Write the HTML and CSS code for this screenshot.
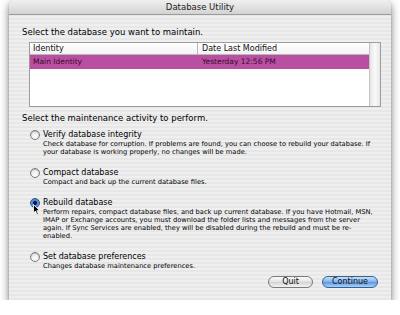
FILE: index.html
```html
<!DOCTYPE html>
<html lang="en">
<head>
  <meta charset="UTF-8">
  <title>Database Utility</title>
  <link rel="stylesheet" href="styles.css">
</head>
<body>
  <div class="window">
    <div class="titlebar">Database Utility</div>
    <div class="content">
      <p class="prompt">Select the database you want to maintain.</p>
      <div class="table">
        <div class="table-main">
          <div class="table-head">
            <span class="col-name">Identity</span>
            <span class="col-date">Date Last Modified</span>
          </div>
          <div class="table-row selected">
            <span class="col-name">Main Identity</span>
            <span class="col-date">Yesterday 12:56 PM</span>
          </div>
        </div>
        <div class="scrollbar"></div>
      </div>

      <p class="prompt second">Select the maintenance activity to perform.</p>
      <div class="options">
        <div class="option">
          <div class="option-title"><span class="radio"></span>Verify database integrity</div>
          <div class="option-desc">Check database for corruption. If problems are found, you can choose to rebuild your database. If your database is working properly, no changes will be made.</div>
        </div>
        <div class="option">
          <div class="option-title"><span class="radio"></span>Compact database</div>
          <div class="option-desc">Compact and back up the current database files.</div>
        </div>
        <div class="option">
          <div class="option-title"><span class="radio checked"></span>Rebuild database</div>
          <div class="option-desc">Perform repairs, compact database files, and back up current database. If you have Hotmail, MSN, IMAP or Exchange accounts, you must download the folder lists and messages from the server again. If Sync Services are enabled, they will be disabled during the rebuild and must be re-enabled.</div>
          <svg class="cursor" width="7" height="11" viewBox="0 0 7 11">
            <path d="M0.5 0.5 L0.5 9 L2.5 7 L4 10.5 L5.3 9.9 L3.9 6.6 L6.5 6.6 Z" fill="#000" stroke="#fff" stroke-width="0.8"/>
          </svg>
        </div>
        <div class="option">
          <div class="option-title"><span class="radio"></span>Set database preferences</div>
          <div class="option-desc">Changes database maintenance preferences.</div>
        </div>
      </div>

      <div class="buttons">
        <button class="btn">Quit</button>
        <button class="btn default">Continue</button>
      </div>
    </div>
  </div>
</body>
</html>
```

FILE: styles.css
```css
body {
  margin: 0;
  padding: 0;
  background: #fff;
  font-family: "DejaVu Sans", "Open Sans", sans-serif;
  color: #111;
}
.window {
  margin: 0 9px;
  width: 382px;
  height: 300px;
  background: repeating-linear-gradient(180deg, #efefef 0, #efefef 2px, #e7e7e7 2px, #e7e7e7 4px);
  border-radius: 5px 5px 0 0;
  box-shadow: 0 4px 9px rgba(0, 0, 0, 0.55), 0 0 1px rgba(0, 0, 0, 0.4);
  overflow: hidden;
}
.titlebar {
  height: 15px;
  line-height: 15px;
  text-align: center;
  font-size: 8.5px;
  color: #222;
  background: linear-gradient(#f0f0f0, #d3d3d3);
  border-bottom: 1px solid #9a9a9a;
  box-sizing: border-box;
}
.content {
  padding: 12px 11px 0 13px;
}
.prompt {
  margin: 0;
  font-size: 8.5px;
  line-height: 11px;
  color: #000;
}
.prompt.second {
  margin-top: 6px;
}
.table {
  display: flex;
  margin: 4px 0 0 7px;
  width: 350px;
  height: 63px;
  background: #fff;
  border: 1px solid #9c9c9c;
}
.table-main {
  flex: 1;
}
.table-head {
  display: flex;
  height: 11px;
  line-height: 11px;
  font-size: 8px;
  border-bottom: 1px solid #b8b8b8;
  background: linear-gradient(#fff, #f2f2f2);
}
.table-row {
  display: flex;
  height: 14px;
  line-height: 14px;
  font-size: 7.5px;
}
.table-row.selected {
  background: #b84fa0;
  color: #3a0a30;
}
.col-name {
  width: 168px;
  padding-left: 3px;
  box-sizing: border-box;
}
.table-head .col-name {
  border-right: 1px solid #b8b8b8;
}
.col-date {
  padding-left: 4px;
}
.scrollbar {
  width: 10px;
  border-left: 1px solid #c4c4c4;
  background: linear-gradient(90deg, #e6e6e6, #fafafa 50%, #e6e6e6);
}
.options {
  margin: 5px 0 0 8px;
}
.option {
  position: relative;
  margin-bottom: 11px;
}
.option-title {
  display: flex;
  align-items: center;
  font-size: 8px;
  line-height: 11px;
  color: #000;
}
.radio {
  width: 8px;
  height: 8px;
  margin-right: 3px;
  border: 1px solid #7c7c7c;
  border-radius: 50%;
  background: radial-gradient(circle at 50% 70%, #fff, #dcdcdc);
  box-shadow: inset 0 1px 1px rgba(0, 0, 0, 0.2);
}
.radio.checked {
  border-color: #2d4f8a;
  background: radial-gradient(circle, #0b1c46 0, #0b1c46 1.6px, #4c86d6 2.4px, #a9cdf6 100%);
}
.option-desc {
  margin-left: 13px;
  width: 336px;
  font-size: 6.7px;
  line-height: 8px;
  color: #000;
}
.cursor {
  position: absolute;
  left: 3px;
  top: 7px;
}
.buttons {
  display: flex;
  justify-content: flex-end;
  gap: 9px;
  margin: -5px 2px 0 0;
}
.btn {
  height: 12px;
  padding: 0;
  border: 1px solid #7a7a7a;
  border-radius: 6px;
  font-family: "DejaVu Sans", "Open Sans", sans-serif;
  font-size: 8px;
  line-height: 10px;
  color: #111;
  background: linear-gradient(#fdfdfd, #e0e0e0 50%, #d2d2d2 51%, #f4f4f4);
  width: 45px;
}
.btn.default {
  width: 56px;
  border-color: #39608f;
  background: linear-gradient(#c8e0fb, #7fb0ec 50%, #5d97e0 51%, #a6d0fa);
}
```
